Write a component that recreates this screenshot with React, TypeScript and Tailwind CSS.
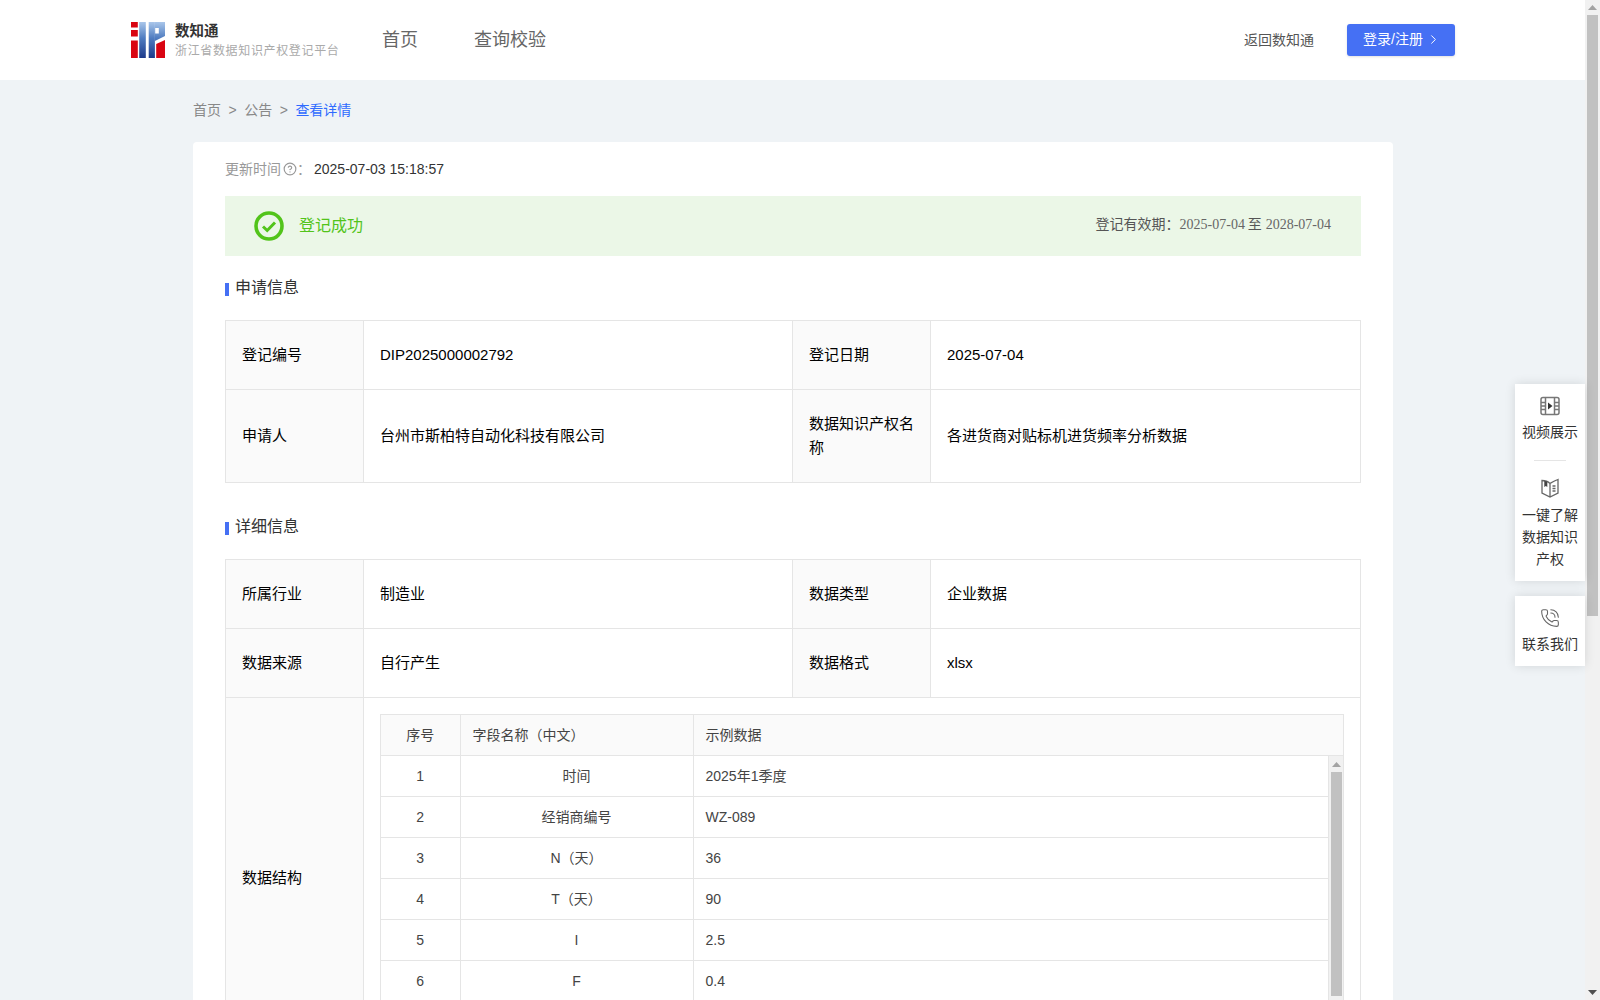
import React from "react";
import { ChevronRight, CircleHelp, PhoneCall } from "lucide-react";

const Logo = () => (
  <svg width="34" height="36" viewBox="0 0 34 36" className="shrink-0">
    <defs>
      <linearGradient id="lg2" x1="0" y1="0" x2="0" y2="36" gradientUnits="userSpaceOnUse">
        <stop offset="0" stopColor="#a9c6ea" />
        <stop offset="0.45" stopColor="#4f7cc0" />
        <stop offset="1" stopColor="#1d3a8a" />
      </linearGradient>
    </defs>
    <rect x="0" y="0" width="6.8" height="5.5" fill="#d90512" />
    <rect x="0" y="8" width="6.8" height="6.5" fill="#d90512" />
    <rect x="0" y="18.5" width="6.8" height="17.5" fill="#d90512" />
    <rect x="8.2" y="0" width="6.6" height="36" fill="url(#lg2)" />
    <rect x="17.7" y="0" width="6.2" height="36" fill="url(#lg2)" />
    <path d="M23.9 0H34V14L23.9 19Z" fill="url(#lg2)" />
    <rect x="24.2" y="6" width="3.6" height="5.5" fill="#fff" />
    <path d="M25.2 22L34 18V36H25.2Z" fill="#d90512" />
  </svg>
);

const Section = ({ title }: { title: string }) => (
  <div className="flex h-[22px] items-center gap-[6px]">
    <span className="mt-[2px] h-[13px] w-1 bg-[#4570f4]" />
    <span className="text-base text-[#333]">{title}</span>
  </div>
);

const labelCell = "border border-[#e5e5e5] bg-[#fafafa] px-4 text-[15px] leading-6 text-black";
const valueCell = "border border-[#e5e5e5] px-4 text-[15px] leading-6 text-black";

const InfoCols = () => (
  <colgroup>
    <col className="w-[138px]" />
    <col className="w-[429px]" />
    <col className="w-[138px]" />
    <col className="w-[430px]" />
  </colgroup>
);

const InnerCols = () => (
  <colgroup>
    <col className="w-[79px]" />
    <col className="w-[233px]" />
    <col />
  </colgroup>
);

const rows = [
  ["1", "时间", "2025年1季度"],
  ["2", "经销商编号", "WZ-089"],
  ["3", "N（天）", "36"],
  ["4", "T（天）", "90"],
  ["5", "I", "2.5"],
  ["6", "F", "0.4"],
];

const Triangle = ({ up, color }: { up: boolean; color: string }) => (
  <svg width="9" height="5" viewBox="0 0 9 5">
    <path d={up ? "M4.5 0L9 5H0Z" : "M0 0H9L4.5 5Z"} fill={color} />
  </svg>
);

export default function App() {
  return (
    <div className="relative flex h-[1000px] w-[1600px] overflow-hidden bg-[#eff3f6] [font-family:'Liberation_Sans','Noto_Sans_CJK_SC',sans-serif]">
      <div className="w-[1585px] shrink-0">
        <header className="flex h-20 items-center bg-white pl-[131px] pr-[130px]">
          <Logo />
          <div className="ml-[10px] w-[207px]">
            <div className="text-[14.5px] font-bold leading-[18px] text-[#333]">数知通</div>
            <div className="mt-[3px] text-xs leading-4 tracking-[0.65px] text-[#aaa]">浙江省数据知识产权登记平台</div>
          </div>
          <nav className="flex gap-14 text-lg text-[#666]">
            <span>首页</span>
            <span>查询校验</span>
          </nav>
          <span className="ml-auto text-sm text-[#555]">返回数知通</span>
          <button className="ml-[33px] flex h-8 w-[108px] items-center gap-[3px] rounded-[3px] bg-[#4570f4] pb-[2px] pl-4 text-sm text-white shadow-sm">
            登录/注册
            <ChevronRight size={15} strokeWidth={1.6} />
          </button>
        </header>

        <main className="pl-[193px]">
          <div className="flex h-[62px] items-start gap-[7.5px] pt-5 text-sm leading-5 text-[#888]">
            <span>首页</span>
            <span>&gt;</span>
            <span>公告</span>
            <span>&gt;</span>
            <span className="text-[#2f6bff]">查看详情</span>
          </div>

          <div className="w-[1200px] rounded bg-white px-8 pt-[17px]">
            <div className="flex h-5 items-center text-sm leading-5">
              <span className="text-[#999]">更新时间</span>
              <CircleHelp size={14} className="ml-[2px] text-[#999]" />
              <span className="w-[17px] text-[#999]">：</span>
              <span className="text-[#333]">2025-07-03 15:18:57</span>
            </div>

            <div className="mt-[17px] flex h-[60px] items-center bg-[#ebf7e7] pl-[29px] pr-[30px]">
              <svg width="30" height="30" viewBox="0 0 30 30">
                <circle cx="15" cy="15" r="13" fill="none" stroke="#52c41a" strokeWidth="3.6" />
                <path d="M9 15.5L13.2 19.5L21 11.5" fill="none" stroke="#52c41a" strokeWidth="3" />
              </svg>
              <span className="ml-[15px] pb-[1px] text-base text-[#52c41a]">登记成功</span>
              <span className="ml-auto pb-[3px] text-sm text-[#555]">
                登记有效期：
                <span className="mr-[-1px] [font-family:'Liberation_Serif','Noto_Sans_CJK_SC',serif] text-[#666]">2025-07-04</span>{" "}
                至{" "}
                <span className="[font-family:'Liberation_Serif','Noto_Sans_CJK_SC',serif] text-[#666]">2028-07-04</span>
              </span>
            </div>

            <div className="mt-[21px]">
              <Section title="申请信息" />
            </div>
            <table className="mt-[21px] w-[1135px] table-fixed border-collapse">
              <InfoCols />
              <tbody>
                <tr className="h-[69px]">
                  <td className={labelCell}>登记编号</td>
                  <td className={valueCell}>DIP2025000002792</td>
                  <td className={labelCell}>登记日期</td>
                  <td className={valueCell}>2025-07-04</td>
                </tr>
                <tr className="h-[93px]">
                  <td className={labelCell}>申请人</td>
                  <td className={valueCell}>台州市斯柏特自动化科技有限公司</td>
                  <td className={labelCell}>数据知识产权名称</td>
                  <td className={valueCell}>各进货商对贴标机进货频率分析数据</td>
                </tr>
              </tbody>
            </table>

            <div className="mt-[33px]">
              <Section title="详细信息" />
            </div>
            <table className="mt-[21px] w-[1135px] table-fixed border-collapse">
              <InfoCols />
              <tbody>
                <tr className="h-[69px]">
                  <td className={labelCell}>所属行业</td>
                  <td className={valueCell}>制造业</td>
                  <td className={labelCell}>数据类型</td>
                  <td className={valueCell}>企业数据</td>
                </tr>
                <tr className="h-[69px]">
                  <td className={labelCell}>数据来源</td>
                  <td className={valueCell}>自行产生</td>
                  <td className={labelCell}>数据格式</td>
                  <td className={valueCell}>xlsx</td>
                </tr>
                <tr>
                  <td className={labelCell}>数据结构</td>
                  <td colSpan={3} className="border border-[#e5e5e5] p-4">
                    <div className="border-t border-l border-r border-[#e5e5e5] text-sm text-[#444]">
                      <table className="w-full table-fixed border-collapse">
                        <InnerCols />
                        <thead>
                          <tr className="h-10 bg-[#fafafa] font-normal">
                            <th className="border-r border-b border-[#e5e5e5] text-center font-normal">序号</th>
                            <th className="border-r border-b border-[#e5e5e5] px-3 text-left font-normal">字段名称（中文）</th>
                            <th className="border-b border-[#e5e5e5] px-3 text-left font-normal">示例数据</th>
                          </tr>
                        </thead>
                      </table>
                      <div className="flex h-[286px] overflow-hidden">
                        <table className="h-fit flex-1 table-fixed border-collapse">
                          <InnerCols />
                          <tbody>
                            {rows.map((r) => (
                              <tr key={r[0]} className="h-[41px]">
                                <td className="border-r border-b border-[#e5e5e5] text-center">{r[0]}</td>
                                <td className="border-r border-b border-[#e5e5e5] text-center">{r[1]}</td>
                                <td className="border-r border-b border-[#e5e5e5] px-3">{r[2]}</td>
                              </tr>
                            ))}
                          </tbody>
                        </table>
                        <div className="flex w-[14px] shrink-0 flex-col items-center bg-[#f1f1f1] pl-[1px]">
                          <div className="flex h-4 items-center justify-center pt-[2px]">
                            <Triangle up color="#a3a3a3" />
                          </div>
                          <div className="h-[224px] w-[11px] bg-[#c1c1c1]" />
                        </div>
                      </div>
                    </div>
                  </td>
                </tr>
              </tbody>
            </table>
          </div>
        </main>
      </div>

      <div className="flex w-[15px] shrink-0 flex-col items-center justify-between bg-[#f1f1f1]">
        <div className="flex w-full flex-col items-center">
          <div className="flex h-[15px] items-center justify-center">
            <Triangle up color="#a3a3a3" />
          </div>
          <div className="h-[601px] w-[11px] bg-[#c1c1c1]" />
        </div>
        <div className="flex h-[15px] items-center justify-center">
          <Triangle up={false} color="#505050" />
        </div>
      </div>

      <aside className="absolute left-[1515px] top-[384px] flex w-[70px] flex-col gap-[15px] text-center text-sm leading-[22px] text-[#333]">
        <div className="flex h-[197px] flex-col items-center bg-white pt-3 shadow-[0_0_10px_rgba(0,0,0,0.12)]">
          <svg width="20" height="20" viewBox="0 0 20 20" fill="none" stroke="#777" strokeWidth="1.5">
            <rect x="1" y="1.5" width="18" height="17" rx="2" />
            <path d="M5.5 1.5V18.5M14.5 1.5V18.5M1 6.5H5.5M1 10H5.5M1 13.5H5.5M14.5 6.5H19M14.5 10H19M14.5 13.5H19" />
            <path d="M8 6.5L12.5 10L8 13.5Z" fill="#333" stroke="none" />
          </svg>
          <div className="mt-[5px]">视频展示</div>
          <div className="mt-[17px] h-px w-8 bg-[#e5e5e5]" />
          <svg width="20" height="20" viewBox="0 0 20 20" fill="none" stroke="#666" strokeWidth="1.3" className="mt-[17px]">
            <path d="M10 5.5C8 3.5 5 2.5 2 2.5V15L10 19L18 15V1.5C16.5 2 15 2.6 13.5 3.5L10 5.5V19" />
            <path d="M12.5 8H15.5M12.5 10.5H15.5M12.5 13H15.5" />
            <path d="M4.3 2.8V9L5.8 8L7.3 9V3.8Z" fill="#444" stroke="none" />
          </svg>
          <div className="mt-[6px] px-1">一键了解数据知识产权</div>
        </div>
        <div className="flex h-[70px] flex-col items-center bg-white pt-3 shadow-[0_0_10px_rgba(0,0,0,0.12)]">
          <PhoneCall size={20} strokeWidth={1.3} className="text-[#666]" />
          <div className="mt-[5px]">联系我们</div>
        </div>
      </aside>
    </div>
  );
}
